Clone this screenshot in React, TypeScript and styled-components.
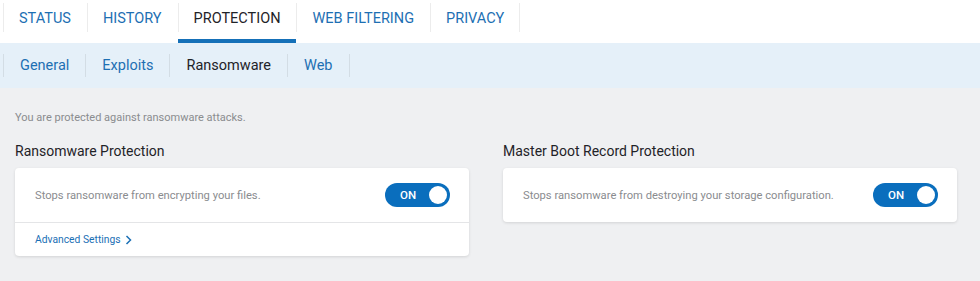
import React from 'react';
import styled, { createGlobalStyle } from 'styled-components';

const GlobalStyle = createGlobalStyle`
  html, body {
    margin: 0;
    padding: 0;
    background: #eff0f2;
    font-family: Roboto, "Noto Sans", "Liberation Sans", sans-serif;
  }
  * { box-sizing: border-box; }
`;

const mainTabs = ['STATUS', 'HISTORY', 'PROTECTION', 'WEB FILTERING', 'PRIVACY'];
const subTabs = ['General', 'Exploits', 'Ransomware', 'Web'];

const Toggle = () => (
  <ToggleTrack>
    <ToggleLabel>ON</ToggleLabel>
    <ToggleKnob />
  </ToggleTrack>
);

export default function App() {
  return (
    <>
      <GlobalStyle />
      <Page>
        <TopNav>
          {mainTabs.map((t) => (
            <MainTab key={t} $active={t === 'PROTECTION'}>
              {t}
            </MainTab>
          ))}
        </TopNav>
        <SubNav>
          {subTabs.map((t) => (
            <SubTab key={t} $active={t === 'Ransomware'}>
              {t}
            </SubTab>
          ))}
        </SubNav>
        <Content>
          <Status>You are protected against ransomware attacks.</Status>
          <Columns>
            <Section>
              <Heading>Ransomware Protection</Heading>
              <Card>
                <Row>
                  <Description>Stops ransomware from encrypting your files.</Description>
                  <Toggle />
                </Row>
                <Footer>
                  <Link>
                    Advanced Settings
                    <svg width="7" height="10" viewBox="0 0 7 10">
                      <polyline
                        points="1.5,1 5.5,5 1.5,9"
                        fill="none"
                        stroke="#1a6fb5"
                        strokeWidth="1.5"
                      />
                    </svg>
                  </Link>
                </Footer>
              </Card>
            </Section>
            <Section>
              <Heading>Master Boot Record Protection</Heading>
              <Card>
                <Row>
                  <Description>
                    Stops ransomware from destroying your storage configuration.
                  </Description>
                  <Toggle />
                </Row>
              </Card>
            </Section>
          </Columns>
        </Content>
      </Page>
    </>
  );
}

const Page = styled.div`
  width: 980px;
  height: 281px;
  background: #eff0f2;
  overflow: hidden;
`;

const TopNav = styled.nav`
  display: flex;
  height: 43px;
  padding-left: 3px;
  background: #fff;
`;

const MainTab = styled.div<{ $active?: boolean }>`
  position: relative;
  height: 43px;
  padding: 0 16px 3px;
  display: flex;
  align-items: center;
  font-size: 14.5px;
  font-weight: 400;
  color: ${(p) => (p.$active ? '#1f2328' : '#1d6fb3')};
  border-bottom: 4px solid ${(p) => (p.$active ? '#1570b8' : 'transparent')};

  &::before {
    content: '';
    position: absolute;
    left: 0;
    top: 3px;
    height: 29px;
    width: 1px;
    background: #ececec;
  }

  &:last-child::after {
    content: '';
    position: absolute;
    right: 0;
    top: 3px;
    height: 29px;
    width: 1px;
    background: #ececec;
  }
`;

const SubNav = styled.nav`
  display: flex;
  align-items: center;
  height: 45px;
  padding-left: 3px;
  background: #e5f0f9;
`;

const SubTab = styled.div<{ $active?: boolean }>`
  position: relative;
  height: 23px;
  padding: 0 16px;
  display: flex;
  align-items: center;
  font-size: 14.5px;
  font-weight: 400;
  color: ${(p) => (p.$active ? '#1f2328' : '#1d6fb3')};
  border-left: 1px solid #d3dde5;

  &:last-child {
    border-right: 1px solid #d3dde5;
  }
`;

const Content = styled.div`
  padding: 23px 15px 0;
`;

const Status = styled.div`
  font-size: 11px;
  color: #8a8c8f;
  line-height: 13px;
`;

const Columns = styled.div`
  display: grid;
  grid-template-columns: 454px 454px;
  column-gap: 34px;
  margin-top: 18px;
`;

const Section = styled.section`
  display: flex;
  flex-direction: column;
`;

const Heading = styled.h2`
  margin: 0 0 8px;
  font-size: 14px;
  font-weight: 400;
  line-height: 18px;
  color: #1f2328;
`;

const Card = styled.div`
  background: #fff;
  border-radius: 4px;
  box-shadow: 0 1px 3px rgba(0, 0, 0, 0.12);
`;

const Row = styled.div`
  display: flex;
  align-items: center;
  justify-content: space-between;
  height: 54px;
  padding: 0 19px 0 20px;
`;

const Description = styled.span`
  font-size: 11.2px;
  color: #8a8c8f;
`;

const Footer = styled.div`
  display: flex;
  align-items: center;
  height: 34px;
  padding: 0 20px;
  border-top: 1px solid #e4e5e7;
`;

const Link = styled.a`
  display: flex;
  align-items: center;
  gap: 4px;
  font-size: 10.3px;
  color: #1a6fb5;
  cursor: pointer;
`;

const ToggleTrack = styled.div`
  display: flex;
  align-items: center;
  justify-content: space-between;
  width: 65px;
  height: 24px;
  padding: 0 3px 0 15px;
  border-radius: 12px;
  background: #0a6ebd;
`;

const ToggleLabel = styled.span`
  font-size: 11.5px;
  font-weight: 500;
  color: #fff;
`;

const ToggleKnob = styled.span`
  width: 18px;
  height: 18px;
  border-radius: 50%;
  background: #fff;
`;
